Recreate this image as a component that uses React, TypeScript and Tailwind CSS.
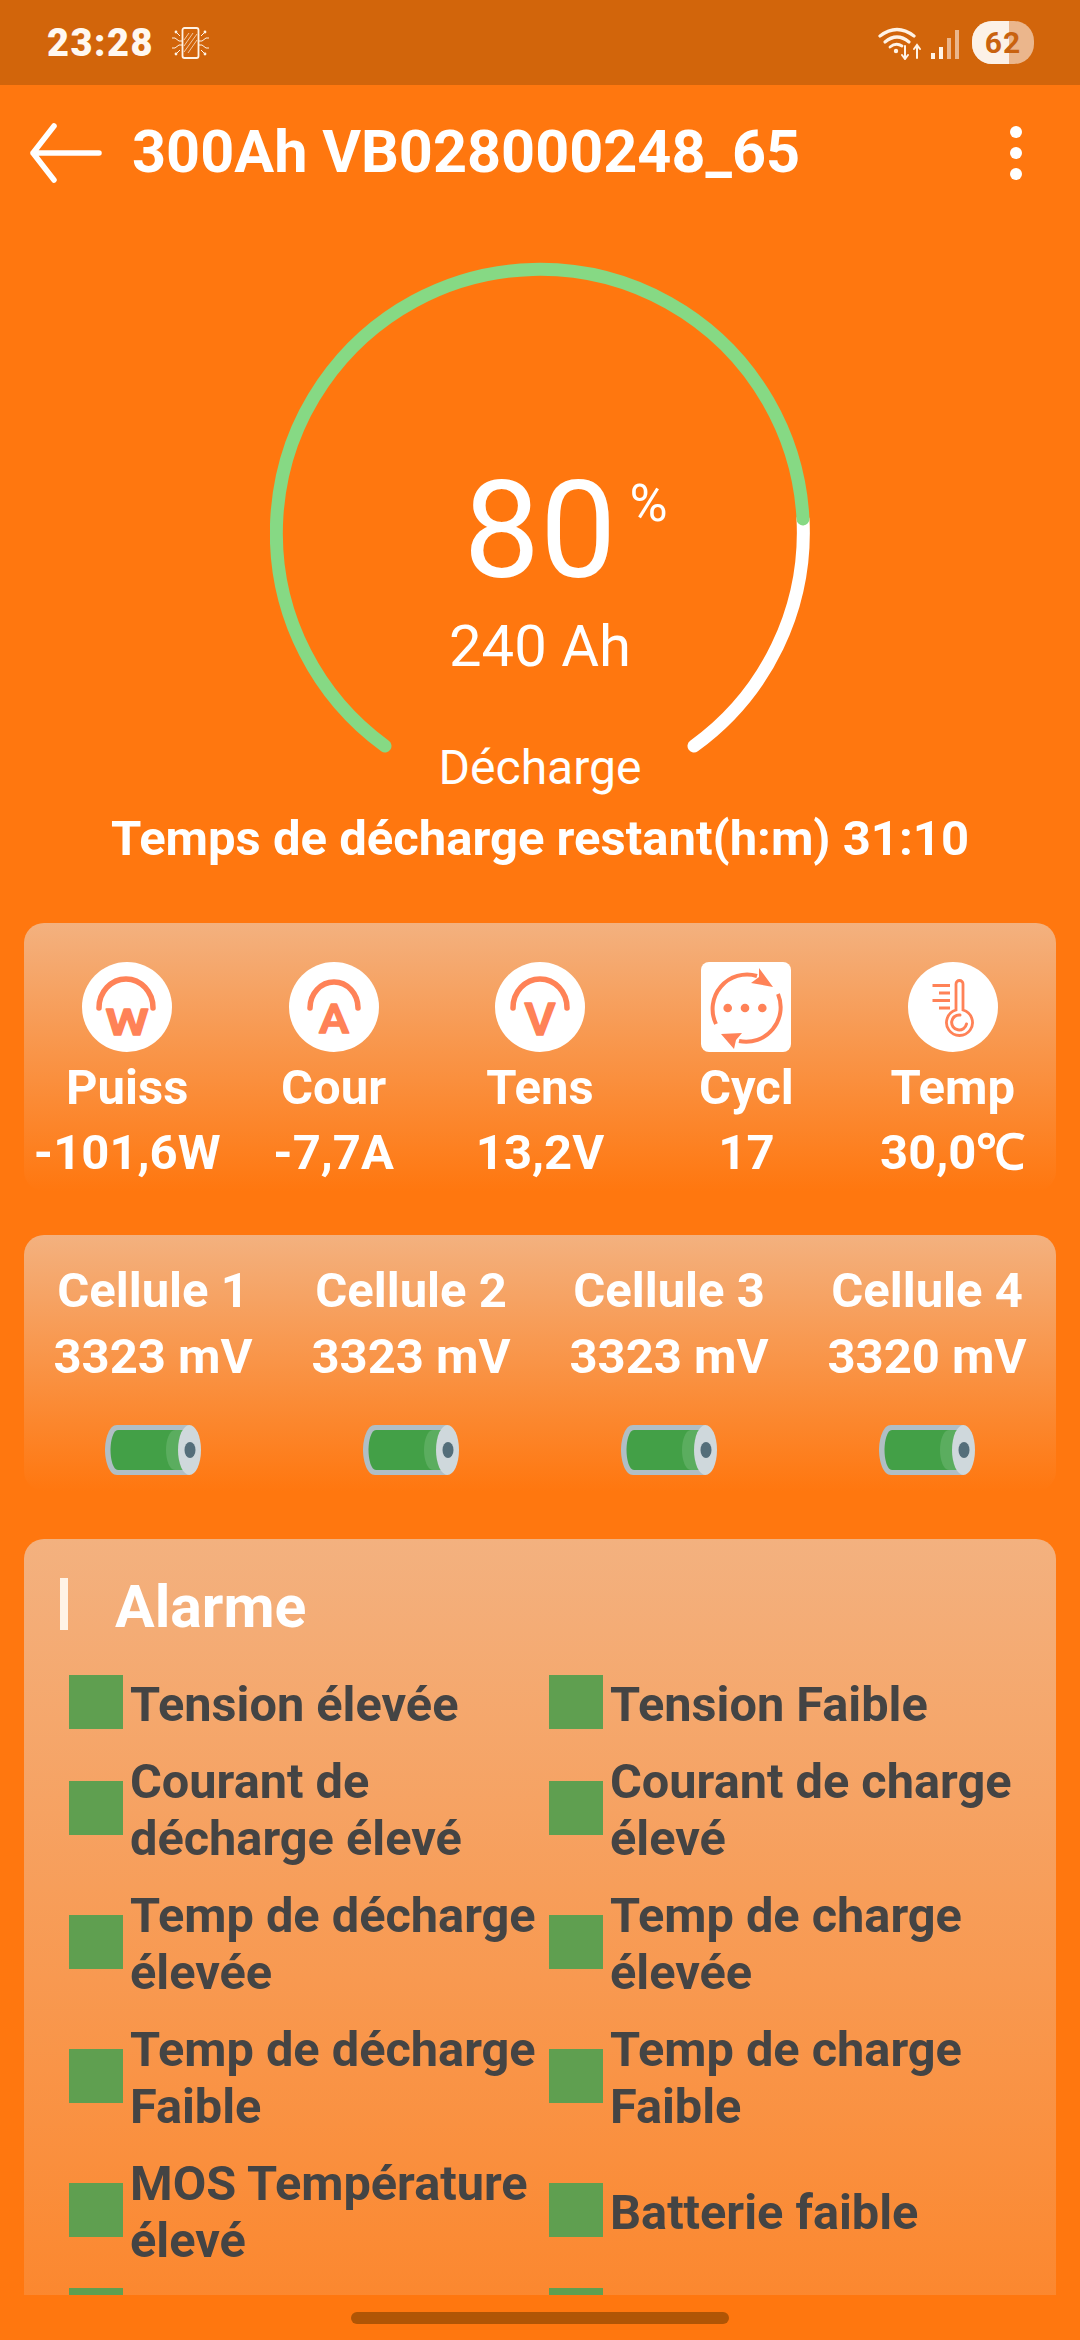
import React from "react";

const coral = "#FF8257";

function VibrateIcon() {
  return (
    <svg width="38" height="32" viewBox="0 0 38 32" fill="none" stroke="#FFF3E6" strokeWidth="1">
      <rect x="11.5" y="1" width="16" height="30" rx="2" strokeWidth="1.8" />
      <path d="M13 25 L26 7 M13 19 L22 6 M17 26 L26 13 M13 13 L18 6" strokeWidth="0.7" />
      <path d="M1 11 H4 L8 14 H11 M1 21 H4 L8 18 H11 M38 11 H35 L31 14 H28 M38 21 H35 L31 18 H28" />
      <path d="M5 5 L9 9 M5 27 L9 23 M34 5 L30 9 M34 27 L30 23" />
      <g fill="#FFF3E6" stroke="none">
        <circle cx="5" cy="5" r="1.4" />
        <circle cx="5" cy="27" r="1.4" />
        <circle cx="34" cy="5" r="1.4" />
        <circle cx="34" cy="27" r="1.4" />
      </g>
    </svg>
  );
}

function WifiIcon() {
  return (
    <svg width="44" height="34" viewBox="0 0 44 34" fill="none" stroke="#FFF3E6" strokeLinecap="round">
      <path d="M2 10 Q19 -3 36 10" strokeWidth="3.2" />
      <path d="M7 16 Q19 6 31 16" strokeWidth="3.2" />
      <path d="M12 21 Q18 16 24 20" strokeWidth="2.8" />
      <circle cx="18" cy="25" r="2.2" fill="#FFF3E6" stroke="none" />
      <path d="M27 20 V32 M24 29 L27 33 L30 29" strokeWidth="2" />
      <path d="M39 32 V20 M36 23 L39 19 L42 23" strokeWidth="2" />
    </svg>
  );
}

function SignalIcon() {
  return (
    <div className="flex items-end gap-[4px] h-[29px]">
      <div className="w-[4px] h-[6px] bg-[#FFF3E6]" />
      <div className="w-[4px] h-[12px] bg-[#FFF3E6]" />
      <div className="w-[4px] h-[21px] bg-[#EBB68C]" />
      <div className="w-[4px] h-[29px] bg-[#EBB68C]" />
    </div>
  );
}

function GaugeArc() {
  return (
    <svg className="absolute top-0 left-0" width="540" height="500" viewBox="0 0 540 500" fill="none" strokeWidth="13" strokeLinecap="round">
      <path d="M533 257 A263.5 263.5 0 0 1 424 484" stroke="#FFFFFF" />
      <path d="M115 484 A263.5 263.5 0 1 1 533 257" stroke="#86D984" />
    </svg>
  );
}

function ArcLetterIcon({ letter, arc, size, y, width }: { letter: string; arc: string; size: number; y: number; width: number }) {
  return (
    <svg width="90" height="90" viewBox="0 0 90 90">
      <circle cx="45" cy="45" r="45" fill="#FFFFFF" />
      <path d={arc} fill="none" stroke={coral} strokeWidth="5.5" strokeLinecap="round" />
      <text
        x="45"
        y={y}
        textAnchor="middle"
        textLength={width}
        lengthAdjust="spacingAndGlyphs"
        fontFamily="Roboto, sans-serif"
        fontWeight="500"
        fontSize={size}
        fill={coral}
        stroke={coral}
        strokeWidth="1.6"
        strokeLinejoin="round"
      >
        {letter}
      </text>
    </svg>
  );
}

function CycleIcon() {
  return (
    <svg width="90" height="90" viewBox="0 0 90 90">
      <rect width="90" height="90" rx="8" fill="#FFFFFF" />
      <g fill="none" stroke={coral} strokeWidth="4">
        <path d="M15 62 A34.5 34.5 0 0 1 56 14" />
        <path d="M77 32 A34.5 34.5 0 0 1 38 79" />
      </g>
      <path d="M58 6 L72 25 L50 21 L58 15 Z" fill={coral} />
      <path d="M20 72 L41 71 L35 78 L33 87 Z" fill={coral} />
      <g fill={coral}>
        <circle cx="26.7" cy="46" r="4.3" />
        <circle cx="44" cy="46" r="4.3" />
        <circle cx="61.3" cy="46" r="4.3" />
      </g>
    </svg>
  );
}

function ThermoIcon() {
  return (
    <svg width="90" height="90" viewBox="0 0 90 90">
      <circle cx="45" cy="45" r="45" fill="#FFFFFF" />
      <g fill="none" stroke={coral} strokeWidth="2.8" strokeLinecap="round">
        <path d="M48 48 V22 A3.5 3.5 0 0 1 55 22 V48 A13 13 0 1 1 48 48 Z" />
        <path d="M52 53 A7.5 7.5 0 1 0 58.5 62" strokeWidth="3" />
      </g>
      <g stroke={coral} strokeWidth="3.2">
        <path d="M24.5 23.5 H42 M31 31 H42 M24.5 38.5 H42 M31 46 H42" />
      </g>
    </svg>
  );
}

function BatteryCell() {
  return (
    <svg width="96" height="50" viewBox="0 0 96 50">
      <path d="M12 0 H84 V50 H12 C4 50 0 36 0 25 C0 14 4 0 12 0 Z" fill="#B0BEC5" />
      <path d="M13 5 H76 V45 H13 C8 45 5.5 34 5.5 25 C5.5 16 8 5 13 5 Z" fill="#43A047" />
      <path d="M70 5 C64 5 61 16 61 25 C61 34 64 45 70 45 H78 V5 Z" fill="#5BAD5F" />
      <ellipse cx="84.5" cy="25" rx="11.5" ry="25" fill="#CFD8DC" />
      <ellipse cx="85" cy="25" rx="5.5" ry="8" fill="#546E7A" />
    </svg>
  );
}

const metrics = [
  { icon: <ArcLetterIcon letter="W" size={36} y={73} width={43} arc="M17 46 A27 29 0 0 1 71 46" />, label: "Puiss", value: "-101,6W" },
  { icon: <ArcLetterIcon letter="A" size={41} y={71} width={30} arc="M21 46 A24 26 0 0 1 69 46" />, label: "Cour", value: "-7,7A" },
  { icon: <ArcLetterIcon letter="V" size={45} y={73} width={31} arc="M18 46 A27 29 0 0 1 72 46" />, label: "Tens", value: "13,2V" },
  { icon: <CycleIcon />, label: "Cycl", value: "17" },
  { icon: <ThermoIcon />, label: "Temp", value: "30,0℃" },
];

const cells = [
  { label: "Cellule 1", value: "3323 mV" },
  { label: "Cellule 2", value: "3323 mV" },
  { label: "Cellule 3", value: "3323 mV" },
  { label: "Cellule 4", value: "3320 mV" },
];

const alarms = [
  "Tension élevée",
  "Tension Faible",
  "Courant de décharge élevé",
  "Courant de charge élevé",
  "Temp de décharge élevée",
  "Temp de charge élevée",
  "Temp de décharge Faible",
  "Temp de charge Faible",
  "MOS Température élevé",
  "Batterie faible",
  "",
  "",
];

export default function App() {
  return (
    <div className="w-[1080px] h-[2340px] flex flex-col overflow-hidden bg-[#FF770F] text-white font-['Roboto',sans-serif]">
      {/* status bar */}
      <div className="h-[85px] shrink-0 bg-[#D2650B] flex items-center pl-[47px] pr-[46px]">
        <span className="text-[38px] leading-none font-black tracking-[1.5px] text-[#FFF8F0]">23:28</span>
        <div className="ml-[17px]">
          <VibrateIcon />
        </div>
        <div className="ml-auto flex items-center">
          <WifiIcon />
          <div className="ml-[9px] mt-[3px]">
            <SignalIcon />
          </div>
          <div className="ml-[13px] relative w-[62px] h-[43px] rounded-[20px] overflow-hidden bg-[#EBB68C] flex items-center justify-center">
            <div className="absolute left-0 top-0 h-full w-[37px] bg-[#FCF1E7]" />
            <span className="relative text-[30px] leading-none font-bold tracking-[1px] text-[#C9620F]">62</span>
          </div>
        </div>
      </div>

      {/* header */}
      <div className="h-[136px] shrink-0 flex items-center pl-[30px] pr-[58px]">
        <svg width="72" height="60" viewBox="0 0 72 60" fill="none" stroke="#FFFFFF" strokeWidth="5.5" strokeLinecap="round" strokeLinejoin="round">
          <path d="M69 30 H3 M24 3 L3 30 L24 57" />
        </svg>
        <span className="ml-[30px] text-[59.4px] leading-none font-bold">300Ah VB028000248_65</span>
        <div className="ml-auto flex flex-col gap-[9px]">
          <div className="w-[12px] h-[12px] rounded-full bg-white" />
          <div className="w-[12px] h-[12px] rounded-full bg-white" />
          <div className="w-[12px] h-[12px] rounded-full bg-white" />
        </div>
      </div>

      {/* gauge */}
      <div className="mt-[41px] shrink-0 flex flex-col items-center">
        <div className="relative w-[540px] flex flex-col items-center pt-[201px]">
          <GaugeArc />
          <div className="relative text-[136px] leading-none">
            80
            <span className="absolute left-full top-[15px] ml-[13px] text-[52px] leading-none">%</span>
          </div>
          <div className="mt-[18px] text-[58px] leading-none">240 Ah</div>
          <div className="mt-[69px] text-[48px] leading-none">Décharge</div>
        </div>
        <div className="mt-[22px] text-[49px] leading-none font-bold">Temps de décharge restant(h:m) 31:10</div>
      </div>

      {/* metrics */}
      <div className="mt-[60px] mx-[24px] shrink-0 h-[268px] rounded-[20px] bg-linear-to-b/srgb from-[#F3B17F] to-[#FF770F] grid grid-cols-5 pt-[39px]">
        {metrics.map((m) => (
          <div key={m.label} className="flex flex-col items-center">
            {m.icon}
            <div className="mt-[7px] text-[49px] leading-[58px] font-bold whitespace-nowrap">{m.label}</div>
            <div className="mt-[7px] text-[49px] leading-[58px] font-bold whitespace-nowrap">{m.value}</div>
          </div>
        ))}
      </div>

      {/* cells */}
      <div className="mt-[44px] mx-[24px] shrink-0 h-[256px] rounded-[20px] bg-linear-to-b/srgb from-[#F3B17F] to-[#FF770F] grid grid-cols-4 pt-[27px]">
        {cells.map((c) => (
          <div key={c.label} className="flex flex-col items-center">
            <div className="text-[49px] leading-[58px] font-bold">{c.label}</div>
            <div className="mt-[8px] text-[49px] leading-[58px] font-bold">{c.value}</div>
            <div className="mt-[39px]">
              <BatteryCell />
            </div>
          </div>
        ))}
      </div>

      {/* alarms, clipped by the scroll area */}
      <div className="mt-[48px] flex-1 min-h-0 overflow-hidden">
        <div className="mx-[24px] min-h-[1060px] rounded-t-[20px] bg-linear-to-b/srgb from-[#F3B17F] to-[#FF770F] pt-[36px] pl-[36px] pr-[24px]">
          <div className="flex items-center">
            <div className="w-[8px] h-[52px] bg-[#FFF3E6]" />
            <span className="ml-[47px] mt-[6px] text-[59px] leading-[52px] font-bold">Alarme</span>
          </div>
          <div className="mt-[43px] ml-[9px] grid grid-cols-[480px_1fr] gap-y-[20px]">
            {alarms.map((a, i) => (
              <div key={i} className="flex items-center">
                <div className="w-[54px] h-[54px] -mt-[5px] shrink-0 bg-[#5F9F50]" />
                <div className="ml-[7px] min-h-[57px] w-[410px] text-[48.7px] leading-[57px] font-bold text-[#444444]">{a}</div>
              </div>
            ))}
          </div>
        </div>
      </div>

      {/* gesture bar */}
      <div className="h-[45px] shrink-0 flex justify-center pt-[17px]">
        <div className="w-[378px] h-[12px] rounded-full bg-[#B05505]" />
      </div>
    </div>
  );
}
